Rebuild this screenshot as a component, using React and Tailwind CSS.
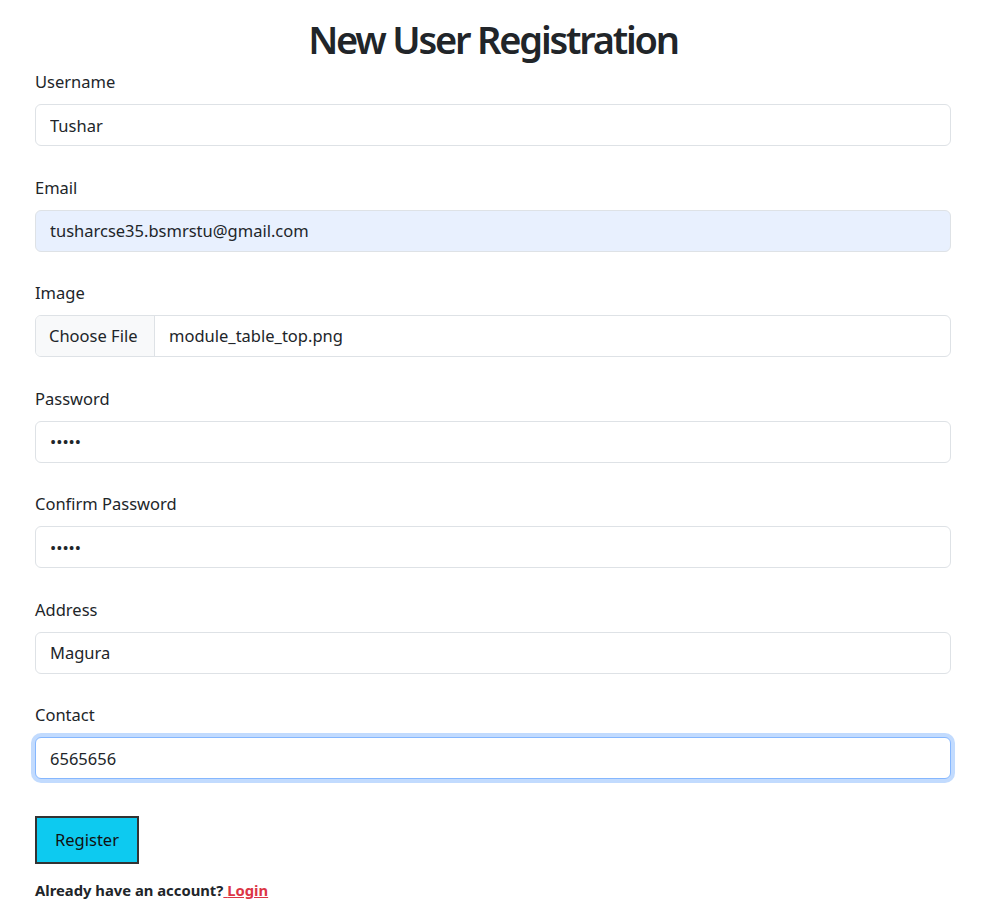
import { useState } from "react";

const fields = [
  { label: "Username", value: "Tushar" },
  { label: "Email", value: "tusharcse35.bsmrstu@gmail.com", autofill: true },
  { label: "Image", file: "module_table_top.png" },
  { label: "Password", value: "12345", type: "password" },
  { label: "Confirm Password", value: "12345", type: "password" },
  { label: "Address", value: "Magura" },
  { label: "Contact", value: "6565656", focus: true },
];

export default function App() {
  const [values, setValues] = useState(fields.map((f) => f.value || ""));

  return (
    <div className="min-h-screen bg-white text-[#212529] px-[35px] font-['Noto_Sans',sans-serif]">
      <h1 className="text-center text-[38px] font-semibold tracking-[-2.2px] leading-[48px] pt-[15px] mb-[6px]">
        New User Registration
      </h1>

      <form onSubmit={(e) => e.preventDefault()}>
        {fields.map((f, i) => (
          <div key={f.label} className="mb-[28.3px]">
            <label className="block text-[16.5px] leading-[26.4px] mb-[8.8px]">
              {f.label}
            </label>
            {f.file ? (
              <div className="flex h-[42px] border border-[#dee2e6] rounded-[6px] overflow-hidden text-[16.5px]">
                <span className="bg-[#f8f9fa] border-r border-[#dee2e6] w-[119px] px-[13px] flex items-center">
                  Choose File
                </span>
                <span className="px-[14px] flex items-center">{f.file}</span>
              </div>
            ) : (
              <input
                type={f.type || "text"}
                value={values[i]}
                onChange={(e) => {
                  const next = [...values];
                  next[i] = e.target.value;
                  setValues(next);
                }}
                className={`block w-full h-[42px] px-[14px] text-[16.5px] rounded-[6px] outline-none ${
                  f.autofill ? "bg-[#e8f0fe]" : "bg-white"
                } ${
                  f.focus
                    ? "border border-[#86b7fe] shadow-[0_0_0_4px_rgba(13,110,253,0.25)]"
                    : "border border-[#dee2e6]"
                }`}
              />
            )}
          </div>
        ))}

        <button
          type="submit"
          className="block mt-[37px] w-[104px] h-[48px] bg-[#0dcaf0] border-2 border-[#333] text-[16.5px] text-[#111]"
        >
          Register
        </button>

        <p className="mt-[15px] text-[14.8px] font-bold leading-[22px]">
          Already have an account?
          <a href="#" className="text-[#dc3545] underline">
            {" "}Login
          </a>
        </p>
      </form>
    </div>
  );
}
